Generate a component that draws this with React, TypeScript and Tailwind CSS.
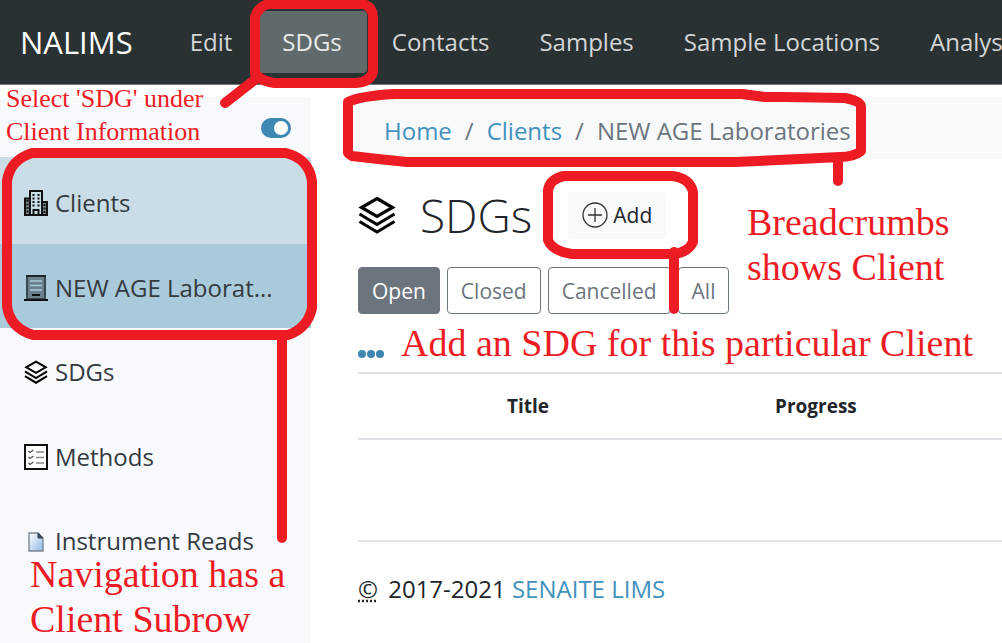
import { useState, type ReactNode } from "react";

const topLinks = ["Edit", "SDGs", "Contacts", "Samples", "Sample Locations", "Analysis"];

function StackIcon({ className }: { className: string }) {
  return (
    <svg viewBox="0 0 38 38" className={className} fill="none" stroke="#050505" strokeWidth="3.2" aria-hidden="true">
      <path d="M19 2.5 34.5 11.5 19 20.5 3.5 11.5Z" />
      <path d="M1.500 18 19 28.500 36.500 18" />
      <path d="M1.500 25.500 19 36 36.500 25.500" />
    </svg>
  );
}

function CityIcon() {
  return (
    <svg viewBox="0 0 24 26" className="h-[26px] w-6 shrink-0" fill="none" stroke="#111" strokeWidth="2" aria-hidden="true">
      <path d="M1 8.500h5V25H1zM18 12h5v13h-5z" fill="#7d8a91" />
      <path d="M6 25V1h12v24M9.500 25v-5h5v5M0 25h24" />
      <path d="M9.500 4v13M14.500 4v13M3.500 10v13M20.500 14v9" strokeDasharray="2 1.500" />
    </svg>
  );
}

function BuildingIcon() {
  return (
    <svg viewBox="0 0 24 26" className="h-[26px] w-6 shrink-0" aria-hidden="true">
      <path d="M3 1h18v23H3z" fill="#6b818d" stroke="#3a4850" strokeWidth="2" />
      <path d="M2 1h20" stroke="#1c262b" strokeWidth="2" />
      <path d="M6 6h12M6 10.500h12M6 15h12" stroke="#a9cadb" strokeWidth="1.500" />
      <path d="M8 20h8M0 25h24" stroke="#111" strokeWidth="2" />
    </svg>
  );
}

function ChecklistIcon() {
  return (
    <svg viewBox="0 0 24 26" className="h-[26px] w-6 shrink-0" fill="none" aria-hidden="true">
      <path d="M1 1h22v24H1z" fill="#fff" stroke="#111" strokeWidth="2" />
      <path d="m4.500 7 1.500 1.500L9.500 6M4.500 13 6 14.500 9.500 12M4.500 19 6 20.500 9.500 18" stroke="#555" strokeWidth="1.300" />
      <path d="M12 8h8M12 13.500h8M12 19h8" stroke="#888" strokeWidth="1.700" />
    </svg>
  );
}

function PageIcon() {
  return (
    <svg viewBox="0 0 24 26" className="h-[26px] w-6 shrink-0" aria-hidden="true">
      <defs>
        <linearGradient id="page" x1="0" y1="0" x2="1" y2="1">
          <stop offset="0" stopColor="#fff" />
          <stop offset="1" stopColor="#8fb9e6" />
        </linearGradient>
      </defs>
      <path d="M5 5h9l5 5v13H5z" fill="url(#page)" stroke="#7c8894" strokeWidth="1.400" />
      <path d="M14 5v5h5z" fill="#33475c" stroke="#33475c" />
    </svg>
  );
}

function SideLink({ icon, label, tone }: { icon: ReactNode; label: string; tone: string }) {
  return (
    <li>
      <a href="#" className={`flex items-center gap-[7px] pt-1 pl-6 ${tone}`}>
        {icon}
        <span className="truncate pr-8">{label}</span>
      </a>
    </li>
  );
}

function Marks() {
  return (
    <svg
      width="1002"
      height="643"
      className="pointer-events-none absolute top-0 left-0"
      fill="none"
      stroke="#ed1c24"
      strokeWidth="10"
      strokeLinecap="round"
      strokeLinejoin="round"
      aria-hidden="true"
    >
      <path d="M268 4H363Q373 7 373 17V72Q370 82 356 83H274Q260 81 255 73V17Q258 7 268 4ZM257 78 225 103" />
      <path d="M32 153H286Q309 159 312 181V308Q308 328 288 335H33Q10 328 7 306V181Q10 160 32 153ZM282 338V538" />
      <path d="M348 102Q360 96 394 94H742L765 97 785 97 845 98Q861 101 861 107V151Q854 157 840 157L800 159 735 162H407L378 159 352 156 348 153ZM838 160V181" />
      <path d="M564 176H672Q690 178 693 192V242Q688 253 672 254H572Q552 251 548 240V190Q550 179 564 176ZM674 252V309" />
    </svg>
  );
}

export default function App() {
  const [open, setOpen] = useState(true);
  return (
    <div className="relative min-h-screen overflow-hidden bg-white text-[24px] leading-9 text-[#212529] [font-family:'Open_Sans','Noto_Sans',sans-serif]">
      <header className="flex h-[85px] items-center overflow-hidden border-b border-[#737b7c] bg-[#293133] pl-5 whitespace-nowrap">
        <a href="#" className="mr-8 text-[31px] text-white">NALIMS</a>
        <nav className="flex text-[#d4d6d6]">
          {topLinks.map((t) => (
            <a
              key={t}
              href="#"
              className={`flex h-[62px] items-center rounded px-[25px] ${t === "SDGs" ? "bg-[#616a6a] text-[#e8eaea]" : ""}`}
            >
              {t}
            </a>
          ))}
        </nav>
      </header>

      <div className="flex pt-3">
        <aside className="min-h-[546px] w-[311px] shrink-0 bg-[#f8f9fc]">
          <div className="flex h-[60px] items-center justify-end pt-0.5 pr-5">
            <button
              type="button"
              role="switch"
              aria-checked={open}
              aria-label="Toggle navigation"
              onClick={() => setOpen(!open)}
              className="flex h-5 w-[30px] items-center justify-end rounded-full bg-[#3d87b0] p-[3px]"
            >
              <span className="size-3.5 rounded-full bg-white" />
            </button>
          </div>
          <ul className="text-[#343a40]">
            <SideLink icon={<CityIcon />} label="Clients" tone="h-[87px] bg-[#cadde7]" />
            <SideLink icon={<BuildingIcon />} label="NEW AGE Laborat..." tone="h-[84px] bg-[#a9cadb]" />
            <SideLink icon={<StackIcon className="h-[26px] w-6 shrink-0" />} label="SDGs" tone="h-[84px]" />
            <SideLink icon={<ChecklistIcon />} label="Methods" tone="h-[85px]" />
            <SideLink icon={<PageIcon />} label="Instrument Reads" tone="h-[84px]" />
          </ul>
        </aside>

        <main className="ml-[47px] min-w-0 flex-1">
          <nav aria-label="Breadcrumb" className="flex h-[62px] items-center gap-[13px] bg-[#f8f9fb] pt-1.5 pl-[26px] whitespace-nowrap text-[#6c757d]">
            <a href="#" className="text-[#4291bd]">Home</a>
            <span>/</span>
            <a href="#" className="text-[#4291bd]">Clients</a>
            <span>/</span>
            <span>NEW AGE Laboratories</span>
          </nav>

          <div className="flex h-[108px] items-center pt-1">
            <StackIcon className="size-[38px]" />
            <h1 className="ml-6 text-[46px] leading-[60px] font-light">SDGs</h1>
            <button type="button" className="ml-9 flex h-[47px] items-center gap-[5px] rounded bg-[#f8f9fa] px-3.5 text-[21px]">
              <svg viewBox="0 0 26 26" className="size-[26px]" fill="none" stroke="#333" strokeWidth="1.300" aria-hidden="true">
                <circle cx="13" cy="13" r="12" />
                <path d="M13 6v14M6 13h14" />
              </svg>
              Add
            </button>
          </div>

          <div className="flex gap-[7px] text-[21px] leading-[30px] text-[#6c757d]">
            <button type="button" className="h-[47px] rounded border border-[#6c757d] bg-[#6c757d] px-[13px] text-white">Open</button>
            <button type="button" className="h-[47px] rounded border border-[#6c757d] px-[13px]">Closed</button>
            <button type="button" className="h-[47px] rounded border border-[#6c757d] px-[13px]">Cancelled</button>
            <button type="button" className="h-[47px] rounded border border-[#6c757d] px-[13px]">All</button>
          </div>

          <button type="button" aria-label="More columns" className="mt-8 flex h-[26px] items-start gap-px pt-1">
            <span className="size-2 rounded-full bg-[#3d87b0]" />
            <span className="size-2 rounded-full bg-[#3d87b0]" />
            <span className="size-2 rounded-full bg-[#3d87b0]" />
          </button>

          <table className="w-full border-y-2 border-[#dee2e6] text-[19px] leading-[26px]">
            <thead>
              <tr className="h-[66px]">
                <th className="w-[149px]" />
                <th className="w-[268px] text-left font-bold">Title</th>
                <th className="text-left font-bold">Progress</th>
              </tr>
            </thead>
          </table>

          <footer className="mt-[100px] border-t-2 border-[#e5e5e5] pt-[29px]">
            <abbr title="Copyright" className="mr-1 underline decoration-dotted">©</abbr> 2017-2021{" "}
            <a href="#" className="text-[#4291bd]">SENAITE LIMS</a>
          </footer>
        </main>
      </div>

      <Marks />
      <div className="pointer-events-none absolute inset-0 whitespace-nowrap text-[#ed1c24] [font-family:'Liberation_Serif',serif]">
        <p className="absolute top-[82px] left-1.5 text-[26px] leading-[33px]">Select 'SDG' under<br />Client Information</p>
        <p className="absolute top-[200px] left-[747px] text-[38px] leading-[45px]">Breadcrumbs<br />shows Client</p>
        <p className="absolute top-[321px] left-[401px] text-[38px] leading-[45px]">Add an SDG for this particular Client</p>
        <p className="absolute top-[552px] left-[30px] text-[38px] leading-[45px]">Navigation has a<br />Client Subrow</p>
      </div>
    </div>
  );
}
